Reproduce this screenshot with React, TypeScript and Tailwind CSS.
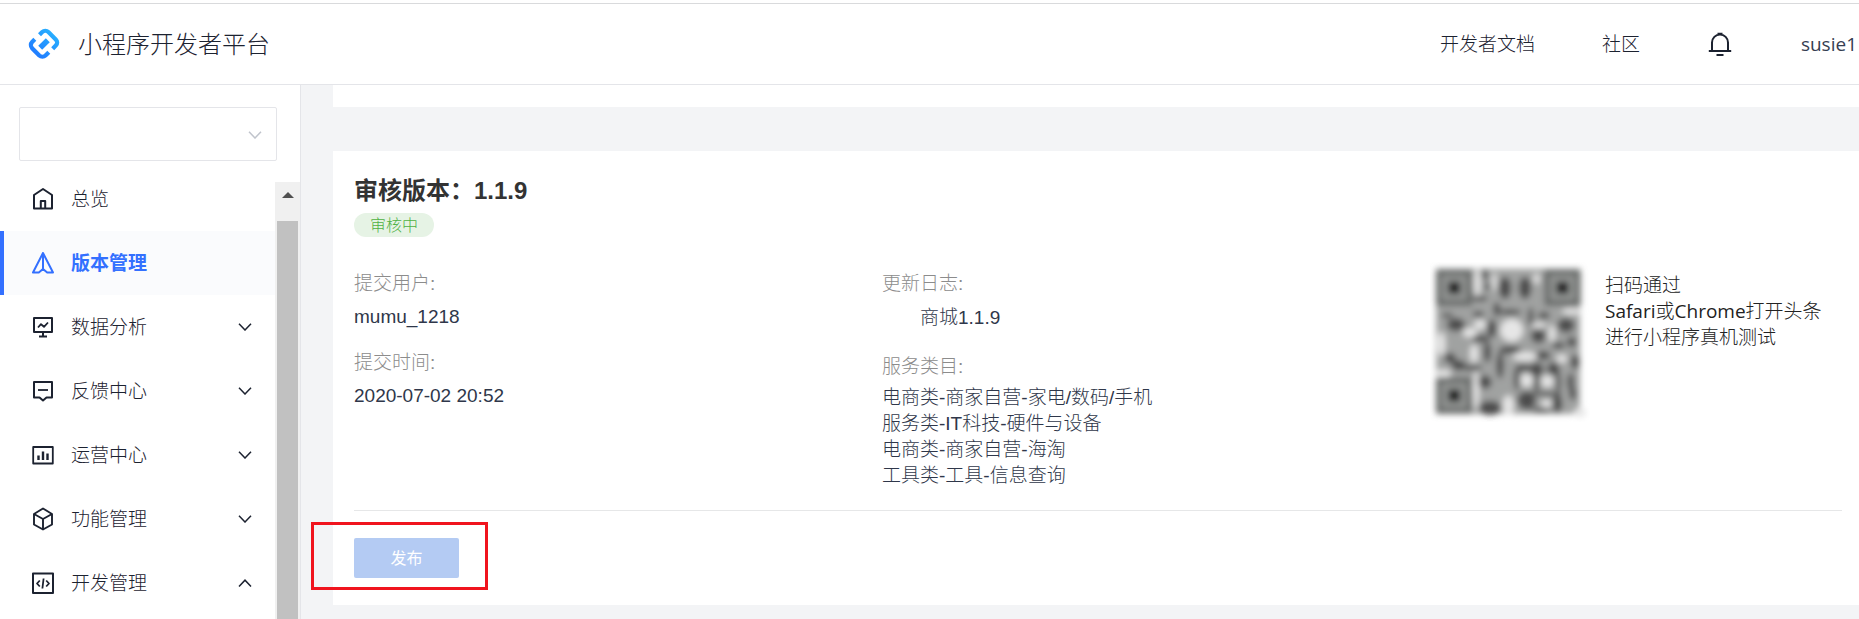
import type { ReactNode } from "react";
import { clsx } from "clsx";

type MenuItem = {
  label: string;
  icon: ReactNode;
  active?: boolean;
  toggle?: "open" | "closed";
};

const HomeIcon = () => (
  <svg className="size-6" viewBox="0 0 24 24" fill="none" stroke="currentColor" strokeWidth="2" strokeLinejoin="round">
    <path d="M3 8 12 2l9 6v13.500H3z" />
    <path d="M9.800 21.500V14h4.400v7.500" />
  </svg>
);

const VersionIcon = () => (
  <svg className="size-6" viewBox="0 0 24 24" fill="none" stroke="currentColor" strokeWidth="2" strokeLinejoin="round">
    <path d="M12 2 2 21.500h5.800L12 18l4.200 3.500H22z" />
    <path d="M12 2v16" />
  </svg>
);

const AnalysisIcon = () => (
  <svg className="size-6" viewBox="0 0 24 24" fill="none" stroke="currentColor" strokeWidth="2" strokeLinejoin="round">
    <path d="M3 3h18v14H3zM12 17v4M8 21.500h8" />
    <path d="m7 12.500 3-3.300 3 2.600 4-4.300" strokeWidth="1.800" />
  </svg>
);

const FeedbackIcon = () => (
  <svg className="size-6" viewBox="0 0 24 24" fill="none" stroke="currentColor" strokeWidth="2" strokeLinejoin="round">
    <path d="M3 3h18v15.500h-5.500L12 21.500l-3.500-3H3z" />
    <path d="M7 11h10" strokeWidth="1.800" />
  </svg>
);

const OperationIcon = () => (
  <svg className="size-6" viewBox="0 0 24 24" fill="none" stroke="currentColor" strokeWidth="1.800" strokeLinejoin="round">
    <path d="M2.200 4h19.600v16.500H2.200z" />
    <path d="M7.500 12.500V17M12 8.500V17M16.500 10.500V17" strokeWidth="2.400" />
  </svg>
);

const FeatureIcon = () => (
  <svg className="size-6" viewBox="0 0 24 24" fill="none" stroke="currentColor" strokeWidth="1.900" strokeLinejoin="round">
    <path d="M12 1.500 21 7v10.500L12 22.500l-9-5V7z" />
    <path d="m3 7 9 5 9-5M12 12v10.500" />
  </svg>
);

const DevelopIcon = () => (
  <svg className="size-6" viewBox="0 0 24 24" fill="none" stroke="currentColor" strokeWidth="2" strokeLinejoin="round">
    <path d="M2 2.500h20V22H2z" />
    <path d="M8.800 9.500 6 12.500l2.800 3M15.200 9.500l2.800 3-2.800 3M12.600 7.500l-1.200 10" strokeWidth="1.800" />
  </svg>
);

const BellIcon = () => (
  <svg className="size-6" viewBox="0 0 24 24" fill="none" stroke="currentColor" strokeWidth="2">
    <path d="M4 18.500V10.500a8 8 0 0 1 16 0v8M.8 19h22.400M8.500 23h7M9.500 1.800h5" />
  </svg>
);

const Chevron = ({ up = false, className }: { up?: boolean; className?: string }) => (
  <svg className={className} viewBox="0 0 14 8" fill="none" stroke="currentColor" strokeWidth="1.500">
    <path d={up ? "M1 7.500 7 1.200l6 6.300" : "M1 .8 7 7l6-6.200"} />
  </svg>
);

const Logo = () => (
  <svg className="size-8" viewBox="0 0 32 32" fill="none" strokeWidth="4.200" strokeLinecap="butt">
    <defs>
      <linearGradient id="logo" x1="4" y1="30" x2="28" y2="2" gradientUnits="userSpaceOnUse">
        <stop stopColor="#1f74ff" />
        <stop offset="1" stopColor="#29b6ff" />
      </linearGradient>
    </defs>
    <g stroke="url(#logo)" strokeLinejoin="round">
      <path d="m11.500 6.800 2.700-2.700a4.500 4.500 0 0 1 6.200 0l7.600 7.600a4 4 0 0 1 0 5.600l-3.300 3.400" />
      <path d="M6.800 11.300 4.100 14a4.500 4.500 0 0 0 0 6.200l7.200 7.300a4.500 4.500 0 0 0 6.200 0l3.300-3.300" />
      <path d="m12.200 19.800 7.600-7.600" strokeWidth="5.500" />
    </g>
  </svg>
);

// [cx, cy, rx, ry]
const qrDark = [
  [225, 78, 19, 34], [285, 78, 19, 34], [165, 38, 9, 16], [172, 74, 9, 10], [150, 110, 24, 8],
  [200, 142, 10, 22], [78, 188, 28, 20], [145, 156, 18, 8], [52, 160, 18, 7], [185, 200, 14, 28],
  [152, 230, 26, 11], [325, 222, 22, 22], [408, 190, 26, 22], [342, 160, 18, 10], [302, 165, 8, 30],
  [240, 150, 34, 8], [240, 264, 34, 12], [60, 288, 18, 15], [86, 310, 22, 16], [172, 270, 11, 32],
  [128, 318, 30, 8], [210, 310, 11, 40], [280, 318, 24, 11], [320, 322, 21, 21], [370, 320, 19, 19],
  [435, 300, 13, 22], [340, 280, 22, 13], [385, 250, 20, 10], [425, 240, 14, 16], [260, 350, 8, 36],
  [320, 365, 7, 30], [385, 360, 7, 36], [422, 360, 10, 28], [165, 360, 20, 20], [180, 438, 34, 22],
  [290, 415, 28, 28], [382, 425, 15, 28], [335, 444, 30, 7], [350, 395, 46, 6], [428, 395, 10, 20],
];

const qrLight = [
  [150, 188, 18, 14], [120, 212, 22, 14], [245, 205, 34, 34], [285, 283, 38, 13], [325, 190, 24, 8],
  [366, 215, 10, 26], [235, 430, 17, 30], [290, 355, 18, 20], [352, 358, 18, 18], [138, 385, 9, 60],
  [142, 62, 10, 42], [34, 245, 12, 36], [40, 335, 24, 12], [425, 148, 30, 9], [193, 60, 7, 28],
  [132, 275, 12, 28], [350, 425, 16, 12], [320, 50, 9, 16], [450, 452, 18, 14], [395, 290, 16, 12],
];

const QrCode = () => (
  <svg className="size-40 shrink-0" viewBox="0 0 480 480" role="img" aria-label="二维码">
    <filter id="qr-blur" x="-10%" y="-10%" width="120%" height="120%">
      <feGaussianBlur stdDeviation="9" />
    </filter>
    <g filter="url(#qr-blur)">
      <rect x="18" y="20" width="432" height="436" fill="#a0a2a1" />
      {qrLight.map(([cx, cy, rx, ry], i) => (
        <ellipse key={i} cx={cx} cy={cy} rx={rx} ry={ry} fill="#e6e6e6" />
      ))}
      {qrDark.map(([cx, cy, rx, ry], i) => (
        <ellipse key={i} cx={cx} cy={cy} rx={rx} ry={ry} fill="#383838" opacity="0.8" />
      ))}
      {[[20, 25], [345, 25], [20, 348]].map(([x, y]) => (
        <g key={`${x}-${y}`}>
          <rect x={x - 2} y={y - 2} width="109" height="109" fill="#686a69" />
          <rect x={x + 15} y={y + 15} width="75" height="75" fill="#929493" />
          <rect x={x + 34} y={y + 34} width="37" height="37" fill="#202020" />
        </g>
      ))}
    </g>
  </svg>
);

const menu: MenuItem[] = [
  { label: "总览", icon: <HomeIcon /> },
  { label: "版本管理", icon: <VersionIcon />, active: true },
  { label: "数据分析", icon: <AnalysisIcon />, toggle: "closed" },
  { label: "反馈中心", icon: <FeedbackIcon />, toggle: "closed" },
  { label: "运营中心", icon: <OperationIcon />, toggle: "closed" },
  { label: "功能管理", icon: <FeatureIcon />, toggle: "closed" },
  { label: "开发管理", icon: <DevelopIcon />, toggle: "open" },
];

const categories = ["电商类-商家自营-家电/数码/手机", "服务类-IT科技-硬件与设备", "电商类-商家自营-海淘", "工具类-工具-信息查询"];

const Field = ({ label, children }: { label: string; children: ReactNode }) => (
  <div>
    <dt className="text-[#8c8c8c]">{label}:</dt>
    {children}
  </div>
);

export default function App() {
  return (
    <div className="flex h-screen flex-col overflow-hidden bg-white pt-[3px] font-['Open_Sans','Noto_Sans_CJK_SC',sans-serif] text-[19px] leading-[26px] font-light text-[#1c2230]">
      <header className="flex h-[82px] shrink-0 items-center border-t border-b border-t-[#d9dadc] border-b-[#e4e5e9] pr-0.5 pl-7">
        <Logo />
        <h1 className="ml-[18px] text-2xl">小程序开发者平台</h1>
        <nav className="ml-auto flex items-center">
          <a href="#docs">开发者文档</a>
          <a href="#community" className="ml-[67px]">社区</a>
          <button type="button" aria-label="通知" className="ml-[68px]">
            <BellIcon />
          </button>
          <a href="#account" className="ml-[69px] font-normal text-[#363e52]">susie1</a>
        </nav>
      </header>

      <div className="flex min-h-0 flex-1">
        <aside className="flex w-[301px] shrink-0 flex-col border-r border-[#e4e5e9]">
          <div className="relative mt-[22px] mr-[23px] ml-[19px] shrink-0">
            <select aria-label="选择小程序" className="h-[54px] w-full appearance-none rounded-xs border border-[#e4e5e9] bg-white px-4">
              <option value=""></option>
            </select>
            <Chevron className="pointer-events-none absolute top-6 right-3.5 h-2 w-4 text-[#c0c4cc]" />
          </div>

          <div className="mt-1.5 flex min-h-0 flex-1">
            <nav className="flex-1 overflow-hidden">
              {menu.map(item => (
                <a
                  key={item.label}
                  href="#menu"
                  className={clsx(
                    "flex h-16 items-center border-l-4 pr-[23px] pl-[27px]",
                    item.active ? "border-[#3370ff] bg-[#fafbfd] font-bold text-[#3370ff]" : "border-transparent",
                  )}
                >
                  {item.icon}
                  <span className="ml-4">{item.label}</span>
                  {item.toggle && <Chevron up={item.toggle === "open"} className="ml-auto h-2 w-3.5" />}
                </a>
              ))}
            </nav>
            {/* Scroll track */}
            <div className="mt-[15px] flex w-[25px] flex-col bg-[#f0f0f0] px-0.5">
              <div className="flex h-[39px] justify-center pt-2.5">
                <svg className="h-1.5 w-3" viewBox="0 0 12 6" fill="#505050">
                  <path d="M6 0l6 6H0z" />
                </svg>
              </div>
              <div className="flex-1 bg-[#c1c1c1]" />
            </div>
          </div>
        </aside>

        <main className="min-w-0 flex-1 bg-[#f3f4f6] pl-8">
          <div className="h-[22px] bg-white" />

          <section className="mt-11 bg-white pt-6 pr-[17px] pb-[27px] pl-[21px] font-['Liberation_Sans','Noto_Sans_CJK_SC',sans-serif] text-[#2f374a]">
            <h2 className="text-2xl leading-8 font-bold text-[#333333]">审核版本：1.1.9</h2>
            <div className="mt-1.5 flex">
              <span className="h-6 rounded-full bg-[#e6f3e5] px-4 pt-px text-base leading-6 text-[#4fb142]">审核中</span>
            </div>

            <div className="mt-[34px] grid grid-cols-[528fr_528fr_432fr]">
              <dl className="flex flex-col gap-5">
                <Field label="提交用户">
                  <dd className="mt-[7px]">mumu_1218</dd>
                </Field>
                <Field label="提交时间">
                  <dd className="mt-[7px]">2020-07-02 20:52</dd>
                </Field>
              </dl>

              <dl className="flex flex-col gap-[23px]">
                <Field label="更新日志">
                  <dd className="mt-2 indent-[38px]">商城1.1.9</dd>
                </Field>
                <Field label="服务类目">
                  <dd className="mt-[5px]">
                    {categories.map(c => (
                      <div key={c}>{c}</div>
                    ))}
                  </dd>
                </Field>
              </dl>

              <div className="-mt-[9px] flex items-start pl-5">
                <QrCode />
                <p className="mt-2.5 ml-[15px] font-['Open_Sans','Noto_Sans_CJK_SC',sans-serif] text-[#222222]">
                  扫码通过
                  <br />
                  <span className="whitespace-nowrap">
                    <span className="font-normal">Safari</span>或<span className="font-normal">Chrome</span>打开头条
                  </span>
                  <br />
                  进行小程序真机测试
                </p>
              </div>
            </div>

            <div className="mt-[21px] border-t border-[#e6e7e8] pt-[27px]">
              <div className="relative w-[105px]">
                <button type="button" disabled className="h-10 w-full rounded-xs bg-[#b4cbf3] pt-0.5 text-base font-normal text-white">
                  发布
                </button>
                <div className="pointer-events-none absolute -top-4 -right-[29px] -bottom-3 -left-[43px] border-3 border-[#f0141e]" />
              </div>
            </div>
          </section>
        </main>
      </div>
    </div>
  );
}
